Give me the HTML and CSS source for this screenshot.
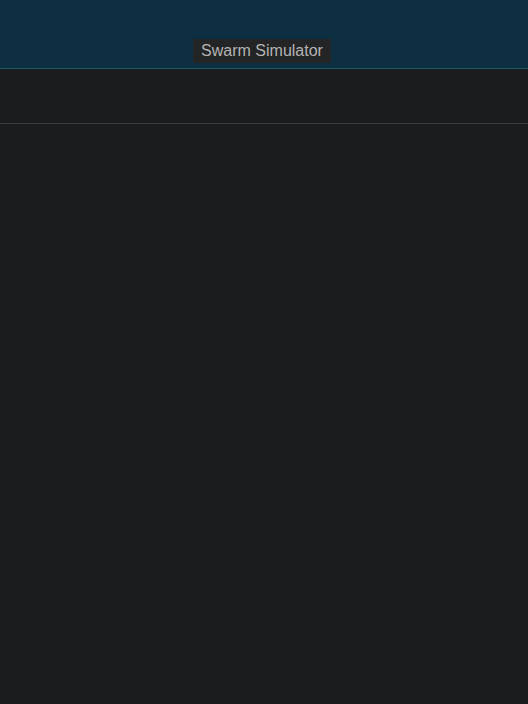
FILE: index.html
```html
<!DOCTYPE html>
<html>
<head>
<meta charset="utf-8">
<link rel="stylesheet" href="styles.css">
</head>
<body>
<header class="top">
  <div class="title">Swarm Simulator</div>
</header>
<nav class="bar"></nav>
<main class="content"></main>
</body>
</html>
```
FILE: styles.css
```css
html, body {
  margin: 0;
  padding: 0;
  background: #1b1c1e;
  height: 100%;
  font-family: "Liberation Sans", Arial, sans-serif;
}
.top {
  background: #0e2e42;
  border-bottom: 1px solid #1e5a5e;
  box-sizing: border-box;
  height: 69px;
  display: flex;
  justify-content: center;
  align-items: flex-end;
  padding-bottom: 5px;
}
.title {
  background: #232425;
  color: #b4b4b4;
  font-size: 16px;
  line-height: 24px;
  height: 24px;
  padding: 0 8px;
  margin-right: 4px;
}
.bar {
  height: 54px;
  border-bottom: 1px solid #3a3b3d;
}
.content {
  flex: 1;
}
```
